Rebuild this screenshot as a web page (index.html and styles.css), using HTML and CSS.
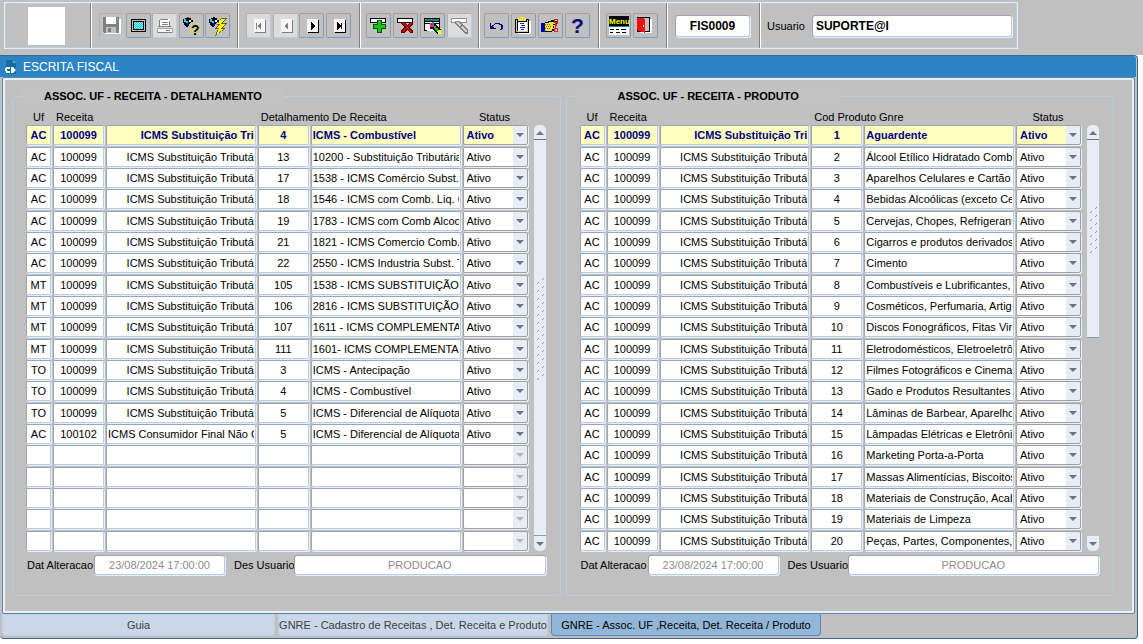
FILE: index.html
```html
<!DOCTYPE html>
<html lang="pt-BR">
<head>
<meta charset="utf-8">
<title>Escrita Fiscal</title>
<link rel="stylesheet" href="styles.css">
</head>
<body>
<header class="top">
  <div class="toolbar">
    <div class="group logo-group"><div class="logo"></div></div>

    <div class="group five">
      <button class="tool off" aria-label="Salvar"><svg viewBox="0 0 23 23"><path fill="#fff" d="M5 5h16v15H5z"/><path fill="#808080" d="M3 3h16v16H4l-1-1z"/><path fill="#c0c0c0" d="M6 13h10v6H6z"/><path fill="#fff" d="M6 3h10v7H6z"/><path fill="#808080" d="M8 14h3v4H8z"/><path fill="#a8a8a8" d="M17 4h1v2h-1z"/></svg></button>
      <button class="tool" aria-label="Tela"><svg viewBox="0 0 23 23"><path d="M4 5h15v13H4z"/><path fill="#c0c0c0" d="M5 6h13v11H5z"/><path d="M6 7h11v9H6z"/><path fill="#a8f4f8" d="M7 8h9v7H7z"/><path stroke="#00c8d0" stroke-dasharray="1 1" d="M7 8.500h9M8 9.500h8M7 10.500h9M8 11.500h8M7 12.500h9M8 13.500h8M7 14.500h9"/></svg></button>
      <button class="tool light" aria-label="Imprimir"><svg viewBox="0 0 23 23"><path fill="#fff" d="M7 5h10v8H7z"/><path fill="#808080" d="M7 5h8v1H7zM9 8h6v1H9zM9 10h6v1H9zM6 6h1v6H6zM16 7h1v6h-1zM5 12h13v1H5zM4 18h15v1H4z"/><path fill="#a8a8a8" d="M4 14h15v1H4zM4 14h1v5H4zM19 14h1v5h-1z"/><path fill="#f4f4f4" d="M5 15h14v3H5z"/><path fill="#808080" d="M13 16h4v1h-4z"/></svg></button>
      <button class="tool" aria-label="Consultar"><svg viewBox="0 0 23 23"><path stroke="#f0e800" stroke-dasharray="1 1" d="M11 9.500h9M9 11.500h11M10 13.500h11M9 15.500h11M10 17.500h11M9 19.500h11"/><path d="M7 3h2v1h2v2h2v2h-2l-3 5H6L3 8V5h2V4h2z"/><path fill="#30d0e8" d="M4 5h2v2h2v2H6V8H4z"/><path fill="#0000d0" d="M6 9h3v3H7v-2H6z"/><path fill="#fff" d="M9 6h2v2H9z"/><path fill="#b02020" d="M7 3h2v1H7z"/><text class="mark" x="11" y="21">?</text></svg></button>
      <button class="tool" aria-label="Executar consulta"><svg viewBox="0 0 23 23"><path d="M7 3h2v1h2v2h2v2h-2l-3 5H6L3 8V5h2V4h2z"/><path fill="#30d0e8" d="M4 5h2v2h2v2H6V8H4z"/><path fill="#0000d0" d="M6 9h3v3H7v-2H6z"/><path fill="#fff" d="M9 6h2v2H9z"/><path fill="#606020" d="M15 4h6l-4 5h4l-4 5h3l-11 8 3-7H8l4-4h-1z"/><path fill="#ffff00" d="M15 5h4l-4 5h4l-4 5h3l-7 5 2-6h-3l4-4h-2z"/></svg></button>
    </div>

    <div class="group four">
      <button class="tool light" aria-label="Primeiro"><svg viewBox="0 0 23 23"><path fill="#808080" d="M8 6h11v13H8z"/><path fill="#f6f6f6" d="M7 5h11v13H7z"/><path fill="#808080" d="M9 9h1v6H9zM14 8v8l-4-4z"/></svg></button>
      <button class="tool light" aria-label="Anterior"><svg viewBox="0 0 23 23"><path fill="#808080" d="M8 6h11v13H8z"/><path fill="#f6f6f6" d="M7 5h11v13H7z"/><path fill="#808080" d="M14 8v8l-4-4z"/></svg></button>
      <button class="tool" aria-label="Próximo"><svg viewBox="0 0 23 23"><path d="M8 6h11v13H8z"/><path fill="#f6f6f6" d="M7 5h11v13H7z"/><path d="M11 8v8l4-4z"/></svg></button>
      <button class="tool" aria-label="Último"><svg viewBox="0 0 23 23"><path d="M8 6h11v13H8z"/><path fill="#f6f6f6" d="M7 5h11v13H7z"/><path d="M10 8v8l4-4zM14 9h1v6h-1z"/></svg></button>
    </div>

    <div class="group four narrow">
      <button class="tool" aria-label="Inserir"><svg viewBox="0 0 23 23"><path d="M3 4h16v5H3z"/><path fill="#fff" d="M4 5h14v3H4z"/><path fill="#005800" d="M10 6h5v4h4v5h-4v4h-5v-4H6v-5h4z"/><path fill="#10c818" d="M11 7h3v4h4v3h-4v4h-3v-4H7v-3h4z"/></svg></button>
      <button class="tool" aria-label="Excluir"><svg viewBox="0 0 23 23"><path d="M3 4h16v5H3z"/><path fill="#fff" d="M4 5h14v3H4z"/><path fill="#700000" d="M7 8h3l3 3 3-3h3v2l-3 3 3 4v2h-3l-3-3-3 3H7v-2l3-4-3-3z"/><path fill="#c01818" d="M8 9h2l3 3 3-3h2l-4 4 4 5h-2l-3-4-3 4H8l4-5z"/></svg></button>
      <button class="tool" aria-label="Limpar"><svg viewBox="0 0 23 23"><path d="M3 4h16v13H3z"/><path fill="#208080" d="M4 5h14v2H4z"/><path fill="#fff" d="M4 8h14v1H4zM4 10h5v6H4zM15 10h3v5h-3zM6 15h8v2H6z"/><path d="M9 9h5l6 7v4h-4l-7-7z"/><path fill="#f02080" d="M9 9h4v4H9z"/><path fill="#3080ff" d="M11 8h2v2h-2z"/><path fill="#ffff00" d="M16 16h4v4h-3z"/><path fill="#10c020" d="M13 12h2v2h2v3h-2l-2-3z"/></svg></button>
      <button class="tool light" aria-label="Editar"><svg viewBox="0 0 23 23"><path fill="#909090" d="M3 4h16v5H3z"/><path fill="#fff" d="M4 5h14v3H4z"/><path fill="#808080" d="M7 7h4l9 9v4h-3L7 10z"/><path fill="#d0d0d0" d="M8 8h2l3 3-1 1-4-3zM13 13l1-1 5 5-1 2z"/></svg></button>
    </div>

    <div class="group four last">
      <button class="tool" aria-label="Desfazer"><svg viewBox="0 0 23 23"><path fill="#000080" d="M5 9h1v5h5v1H5zM6 12h1v-1h1v2h1v1H6zM8 11h1v-1h1V9h5v1h2v1h1v4h-1v1h-2v-1h1v-4h-2v-1h-4v1H9v1H8z"/></svg></button>
      <button class="tool" aria-label="Colar"><svg viewBox="0 0 23 23"><path fill="#fff" d="M6 7h13v13H6z"/><path d="M3 5h14v14H3z"/><path fill="#c8c8c8" d="M4 6h12v12H4z"/><path d="M5 6h10v11H5z"/><path fill="#f0e040" d="M6 4h8v3H6zM8 3h4v1H8z"/><path fill="#fff" d="M6 8h9v9H6z"/><path fill="#2030b0" d="M8 9h4v1H8zM9 11h4v1H9zM8 13h5v1H8zM9 15h3v1H9z"/></svg></button>
      <button class="tool" aria-label="Selecionar"><svg viewBox="0 0 23 23"><path fill="#0000b0" d="M2 9h4v9H2z"/><path d="M6 8h3V7h3V6h4v1h2v4h-3v6h-2v1H6z"/><path fill="#f0e040" d="M6 9h4V8h6v2h-2v1h1v1h-1v2h1v1h-2v2H6z"/><path stroke="#806000" stroke-dasharray="1 1" d="M6 10.500h6M7 12.500h6M6 14.500h6"/><path fill="none" stroke="#e02020" d="M15.500 5.500h3v3h-3zM15.500 14.500h3v3h-3zM16.500 9v5M19 8l-3 6"/></svg></button>
      <button class="tool" aria-label="Ajuda"><svg viewBox="0 0 23 23"><text class="help" x="5" y="19">?</text></svg></button>
    </div>

    <div class="group two">
      <button class="tool" aria-label="Menu"><svg viewBox="0 0 23 23"><path d="M2 2h20v10H2z"/><text class="menu" x="2" y="10">Menu</text><path fill="#208080" d="M2 12h20v1H2z"/><path fill="#fff" d="M2 13h20v8H2z"/><path d="M3 15h4v1H3zM9 15h3v1H9zM14 15h5v1h-5zM3 18h3v1H3zM9 18h4v1H9zM15 18h4v1h-4z"/></svg></button>
      <button class="tool" aria-label="Sair"><svg viewBox="0 0 23 23"><path fill="#fff" d="M6 5h12v14H6z"/><path d="M3 3h13v15H3z"/><path fill="#c0c0c0" d="M10 4h5v13h-5z"/><path fill="#f01010" d="M3 4h6l2 1v14l-8-3z"/><path fill="#fff" d="M9 11h1v2H9z"/></svg></button>
    </div>

    <div class="group code-group"><input class="box code" value="FIS0009" aria-label="Programa"></div>
    <div class="group user-group"><label for="usr">Usuario</label><input class="box user" id="usr" value="SUPORTE@I"></div>
  </div>
</header>

<main class="window">
  <div class="titlebar">
    <svg class="doc" viewBox="0 0 12 16"><path fill="#176ca4" d="M1 1h7l3 3v11H1z"/><path fill="#5fa8d8" d="M8 1v3h3z"/><path fill="#fff" d="M0 9h1V8h4v2H2v2h3v2H1v-2H0zM6 8h2l3 3-3 3H6z"/></svg>
    <h1>ESCRITA FISCAL</h1>
  </div>
  <div class="client">
    <fieldset class="panel">
      <legend>ASSOC. UF - RECEITA - DETALHAMENTO</legend>
      <div class="block">
        <table>
          <colgroup><col class="c-uf"><col class="c-code"><col><col class="c-code"><col><col class="c-status"></colgroup>
          <thead><tr><th class="mid">Uf</th><th colspan="2">Receita</th><th colspan="2">Detalhamento De Receita</th><th class="mid">Status</th></tr></thead>
          <tbody id="detail"></tbody>
        </table>
        <div class="scroll full">
          <button class="arrow up" aria-label="Rolar para cima"></button>
          <div class="track"><div class="thumb"><div class="grip"></div></div></div>
          <button class="arrow down" aria-label="Rolar para baixo"></button>
        </div>
      </div>
      <div class="foot">
        <label for="dt1">Dat Alteracao</label><input class="box date" id="dt1" value="23/08/2024 17:00:00" readonly>
        <label for="us1">Des Usuario</label><input class="box who" id="us1" value="PRODUCAO" readonly>
      </div>
    </fieldset>
    <fieldset class="panel">
      <legend class="wide">ASSOC. UF - RECEITA - PRODUTO</legend>
      <div class="block">
        <table>
          <colgroup><col class="c-uf"><col class="c-code"><col><col class="c-code"><col><col class="c-status"></colgroup>
          <thead><tr><th class="mid">Uf</th><th colspan="2">Receita</th><th colspan="2">Cod Produto Gnre</th><th class="mid">Status</th></tr></thead>
          <tbody id="product"></tbody>
        </table>
        <div class="scroll half">
          <button class="arrow up" aria-label="Rolar para cima"></button>
          <div class="track"><div class="thumb"><div class="grip"></div></div></div>
          <button class="arrow down" aria-label="Rolar para baixo"></button>
        </div>
      </div>
      <div class="foot">
        <label for="dt2">Dat Alteracao</label><input class="box date" id="dt2" value="23/08/2024 17:00:00" readonly>
        <label for="us2">Des Usuario</label><input class="box who" id="us2" value="PRODUCAO" readonly>
      </div>
    </fieldset>
  </div>
  <nav class="tabs">
    <button class="tab first">Guia</button>
    <button class="tab">GNRE - Cadastro de Receitas , Det. Receita e Produto</button>
    <button class="tab active">GNRE - Assoc. UF ,Receita, Det. Receita / Produto</button>
  </nav>
</main>
<script src="rows.js"></script>
</body>
</html>
```
FILE: styles.css
```css
* { box-sizing: border-box; }

body, button, input, select {
  font-family: "Liberation Sans", Arial, sans-serif;
  font-size: 11px;
  color: #000;
}

body { margin: 0; background: #fff; }

/* toolbar */
.top { background: #c0c0c0; padding: 2px 0 6px 4px; }

.toolbar {
  display: flex;
  width: max-content;
  height: 47px;
  border: 1px solid #e6f0fc;
  box-shadow: inset 0 0 0 1px #b8cce4;
}

.group {
  display: flex;
  align-items: center;
  justify-content: space-between;
  border-left: 1px solid #fff;
  border-right: 1px solid #808080;
}
.group:first-child { border-left: 0; }
.group:last-child { border-right: 0; }

.logo-group { width: 86px; padding-left: 23px; }
.logo { width: 37px; height: 38px; background: #fff; }
.five { width: 147px; padding: 0 7px; }
.four { width: 122px; padding: 0 8px 0 7px; }
.four.narrow { width: 119px; padding: 0 6px 0 5px; }
.four.last { width: 120px; padding: 0 8px 0 4px; }
.two { width: 68px; padding: 0 8px 0 6px; }
.code-group { width: 93px; padding: 0 8px 0 7px; }
.user-group { padding: 0 5px 0 6px; gap: 7px; }

.tool {
  width: 25px;
  height: 25px;
  padding: 0;
  background: #c0c0c0;
  border: 1px solid;
  border-color: #a0a0a0 #7c9cc0 #7c9cc0 #a0a0a0;
  border-radius: 2px;
}
.tool.off { border-color: #b0b0b0 #b8cce4 #b8cce4 #b0b0b0; }
.tool.light { background: #dcdcdc; border-color: #b0b0b0 #b8cce4 #b8cce4 #b0b0b0; }
.tool svg { display: block; width: 23px; height: 23px; shape-rendering: crispEdges; }
.tool text { font-family: "Liberation Sans", Arial, sans-serif; font-weight: bold; }
.mark { font-size: 14px; }
.help { font-size: 21px; fill: #000080; }
.menu { font-size: 8px; fill: #ffff00; }

.box {
  height: 20px;
  padding: 0 3px;
  background: #fff;
  border: 1px solid;
  border-color: #9ca4b0 #b8cce4 #b8cce4 #9ca4b0;
  border-radius: 3px;
  box-shadow: 1px 1px 0 #e6f0fc;
}
.code { width: 75px; height: 22px; font-size: 12px; font-weight: bold; text-align: center; }
.user { width: 200px; height: 22px; font-size: 12px; font-weight: bold; }

/* window */
.window {
  margin-right: 5px;
  background: #c0c0c0;
  border: solid #3f6590;
  border-width: 1px 1px 1px 0;
  border-radius: 0 4px 4px 4px;
}

.titlebar {
  display: flex;
  align-items: center;
  gap: 6px;
  height: 21px;
  margin-right: 1px;
  padding-left: 5px;
  background: #2c84c4;
  border-radius: 0 3px 0 0;
}
.titlebar h1 { margin: 0; font-size: 12px; font-weight: normal; color: #fff; }
.doc { width: 12px; height: 16px; }

.client {
  display: flex;
  gap: 5px;
  margin: 0 2px;
  padding: 10px 20px 17px 9px;
  border: 1px solid #5d86b3;
  border-radius: 2px;
  box-shadow: inset 0 0 0 2px #e8f0fa;
}

.panel {
  flex: 1;
  min-width: 0;
  margin: 0;
  padding: 1px 14px 20px 13px;
  border: 1px solid #b8cce4;
  border-radius: 4px;
}
.panel legend {
  margin-left: -4px;
  padding: 0 22px;
  background: #c2c2c2;
  font-size: 11px;
  font-weight: bold;
  line-height: 16px;
}
.panel legend.wide { padding: 0 42px; }

.block { display: flex; gap: 5px; }

table { flex: 1; width: 0; table-layout: fixed; border-collapse: collapse; }
.c-uf { width: 27px; }
.c-code { width: 53px; }
.c-status { width: 66px; }

th {
  height: 20px;
  padding: 0 0 2px 3px;
  font-weight: normal;
  line-height: 12px;
  text-align: left;
  vertical-align: bottom;
  white-space: nowrap;
}
th.mid { padding: 0 2px 2px 0; text-align: center; }

/* row heights alternate 22, 21, 21 */
tbody tr { height: 21px; }
tbody tr:nth-child(3n+1) { height: 22px; }
td { padding: 0 2px 0 0; vertical-align: top; }
td:last-child { padding-right: 1px; }

.cell, .status {
  display: block;
  width: 100%;
  height: 20px;
  padding: 0 1px;
  background: #fff;
  border: 1px solid;
  border-color: #9ca4b0 #b8cce4 #b8cce4 #9ca4b0;
  border-radius: 2px;
  box-shadow: 1px 1px 0 #e6f0fc;
}
.mid .cell { text-align: center; }
.end .cell { text-align: right; }

.status {
  appearance: none;
  padding: 0 16px 0 3px;
  border-color: #a0a0a0;
  background: #fff url("data:image/svg+xml,%3Csvg xmlns='http://www.w3.org/2000/svg' width='14' height='18'%3E%3Cpath fill='%23e8ecf4' d='M0 0h14v18H0z'/%3E%3Cpath fill='%236b7290' d='M3 7h8l-4 4z'/%3E%3C/svg%3E") right center no-repeat;
}
.status:disabled {
  opacity: 1;
  background-image: url("data:image/svg+xml,%3Csvg xmlns='http://www.w3.org/2000/svg' width='14' height='18'%3E%3Cpath fill='%23e8ecf4' d='M0 0h14v18H0z'/%3E%3Cpath fill='%23b4b4b4' d='M3 7h8l-4 4z'/%3E%3C/svg%3E");
}

.current .cell, .current .status {
  background-color: #ffffc0;
  color: #000080;
  font-weight: bold;
}

/* scroll bar */
.scroll { display: flex; flex-direction: column; width: 12px; margin: 20px 0 1px; }
.arrow {
  height: 15px;
  padding: 0;
  border: 0;
  background: #e8ecf4 url("data:image/svg+xml,%3Csvg xmlns='http://www.w3.org/2000/svg' width='12' height='15'%3E%3Cpath fill='%236b7290' d='M2 10h8l-4-4z'/%3E%3C/svg%3E") no-repeat;
}
.arrow.up { border-bottom: 1px solid #6b7290; border-radius: 5px 5px 0 0; }
.arrow.down {
  background-image: url("data:image/svg+xml,%3Csvg xmlns='http://www.w3.org/2000/svg' width='12' height='15'%3E%3Cpath fill='%236b7290' d='M2 6h8l-4 4z'/%3E%3C/svg%3E");
  border-radius: 0 0 5px 5px;
}
.track { flex: 1; }
.thumb {
  display: flex;
  align-items: center;
  justify-content: center;
  height: 100%;
  padding-bottom: 16px;
  background: #e8ecf4;
  border-bottom: 1px solid #7c9cc0;
}
.half .thumb { height: 50%; }
.grip {
  width: 8px;
  height: 104px;
  background: url("data:image/svg+xml,%3Csvg xmlns='http://www.w3.org/2000/svg' width='8' height='8' shape-rendering='crispEdges'%3E%3Cpath fill='%237c9cc0' d='M6 1h1v1H6zM7 0h1v1H7zM1 5h1v1H1zM2 4h1v1H2z'/%3E%3C/svg%3E");
}
.half .grip { height: 48px; }

.foot { display: flex; align-items: center; margin-top: 3px; padding-left: 1px; }
.foot label { white-space: nowrap; }
.foot .box { color: #8c8c8c; text-align: center; }
.foot label[for^="dt"] { width: 67px; }
.foot label[for^="us"] { width: 60px; }
.date { width: 131px; margin-right: 9px; }
.who { flex: 1; min-width: 0; }

/* tabs */
.tabs { display: flex; gap: 3px; padding: 0 2px 2px; }
.tab {
  width: 270px;
  height: 22px;
  padding: 0;
  background: #c9d7e9;
  border: 1px solid #c0d0e4;
  border-radius: 0 0 4px 4px;
  color: #404040;
  white-space: nowrap;
}
.tab.first { width: 273px; }
.tab.active { background: #92b6d8; border-color: #5d86b3; border-top-color: #92b6d8; color: #000; }
```
FILE: rows.js
```js
const SUB = "ICMS Substituição Tributá";

const detail = [
  ["AC", "100099", "ICMS Substituição Tri", "4", "ICMS - Combustível"],
  ["AC", "100099", SUB, "13", "10200 - Substituição Tributária"],
  ["AC", "100099", SUB, "17", "1538 - ICMS Comércio Subst. T"],
  ["AC", "100099", SUB, "18", "1546 - ICMS com Comb. Liq. Ga"],
  ["AC", "100099", SUB, "19", "1783 - ICMS com Comb Alcool"],
  ["AC", "100099", SUB, "21", "1821 - ICMS Comercio Comb. L"],
  ["AC", "100099", SUB, "22", "2550 - ICMS Industria Subst. Tr"],
  ["MT", "100099", SUB, "105", "1538 - ICMS SUBSTITUIÇÃO TR"],
  ["MT", "100099", SUB, "106", "2816 - ICMS SUBSTITUIÇÃO TR"],
  ["MT", "100099", SUB, "107", "1611 - ICMS COMPLEMENTAR"],
  ["MT", "100099", SUB, "111", "1601- ICMS COMPLEMENTAR C"],
  ["TO", "100099", SUB, "3", "ICMS - Antecipação"],
  ["TO", "100099", SUB, "4", "ICMS - Combustível"],
  ["TO", "100099", SUB, "5", "ICMS - Diferencial de Alíquota"],
  ["AC", "100102", "ICMS Consumidor Final Não Co", "5", "ICMS - Diferencial de Alíquota"],
  null, null, null, null, null
];

const product = [
  "Aguardente",
  "Álcool Etílico Hidratado Combus",
  "Aparelhos Celulares e Cartão I",
  "Bebidas Alcoólicas (exceto Ce",
  "Cervejas, Chopes, Refrigerant",
  "Cigarros e produtos derivados",
  "Cimento",
  "Combustíveis e Lubrificantes, o",
  "Cosméticos, Perfumaria, Artigo",
  "Discos Fonográficos, Fitas Vir",
  "Eletrodomésticos, Eletroeletrôn",
  "Filmes Fotográficos e Cinemato",
  "Gado e Produtos Resultantes d",
  "Lâminas de Barbear, Aparelho",
  "Lâmpadas Elétricas e Eletrônic",
  "Marketing Porta-a-Porta",
  "Massas Alimentícias, Biscoitos",
  "Materiais de Construção, Acab",
  "Materiais de Limpeza",
  "Peças, Partes, Componentes, A"
].map((name, i) => ["AC", "100099", i ? SUB : "ICMS Substituição Tri", String(i + 1), name]);

const labels = ["Uf", "Receita", "Descrição", "Código", "Nome"];
const align = ["mid", "mid", "end", "mid", ""];

function fill(id, rows) {
  const body = document.getElementById(id);
  rows.forEach((row, i) => {
    const tr = body.insertRow();
    if (i === 0) tr.className = "current";
    labels.forEach((label, c) => {
      const td = tr.insertCell();
      td.className = align[c];
      const input = document.createElement("input");
      input.className = "cell";
      input.setAttribute("aria-label", label);
      input.setAttribute("value", row ? row[c] : "");
      td.append(input);
    });
    const select = document.createElement("select");
    select.className = "status";
    select.setAttribute("aria-label", "Status");
    select.disabled = !row;
    select.add(new Option(row ? "Ativo" : ""));
    tr.insertCell().append(select);
  });
}

fill("detail", detail);
fill("product", product);
```
